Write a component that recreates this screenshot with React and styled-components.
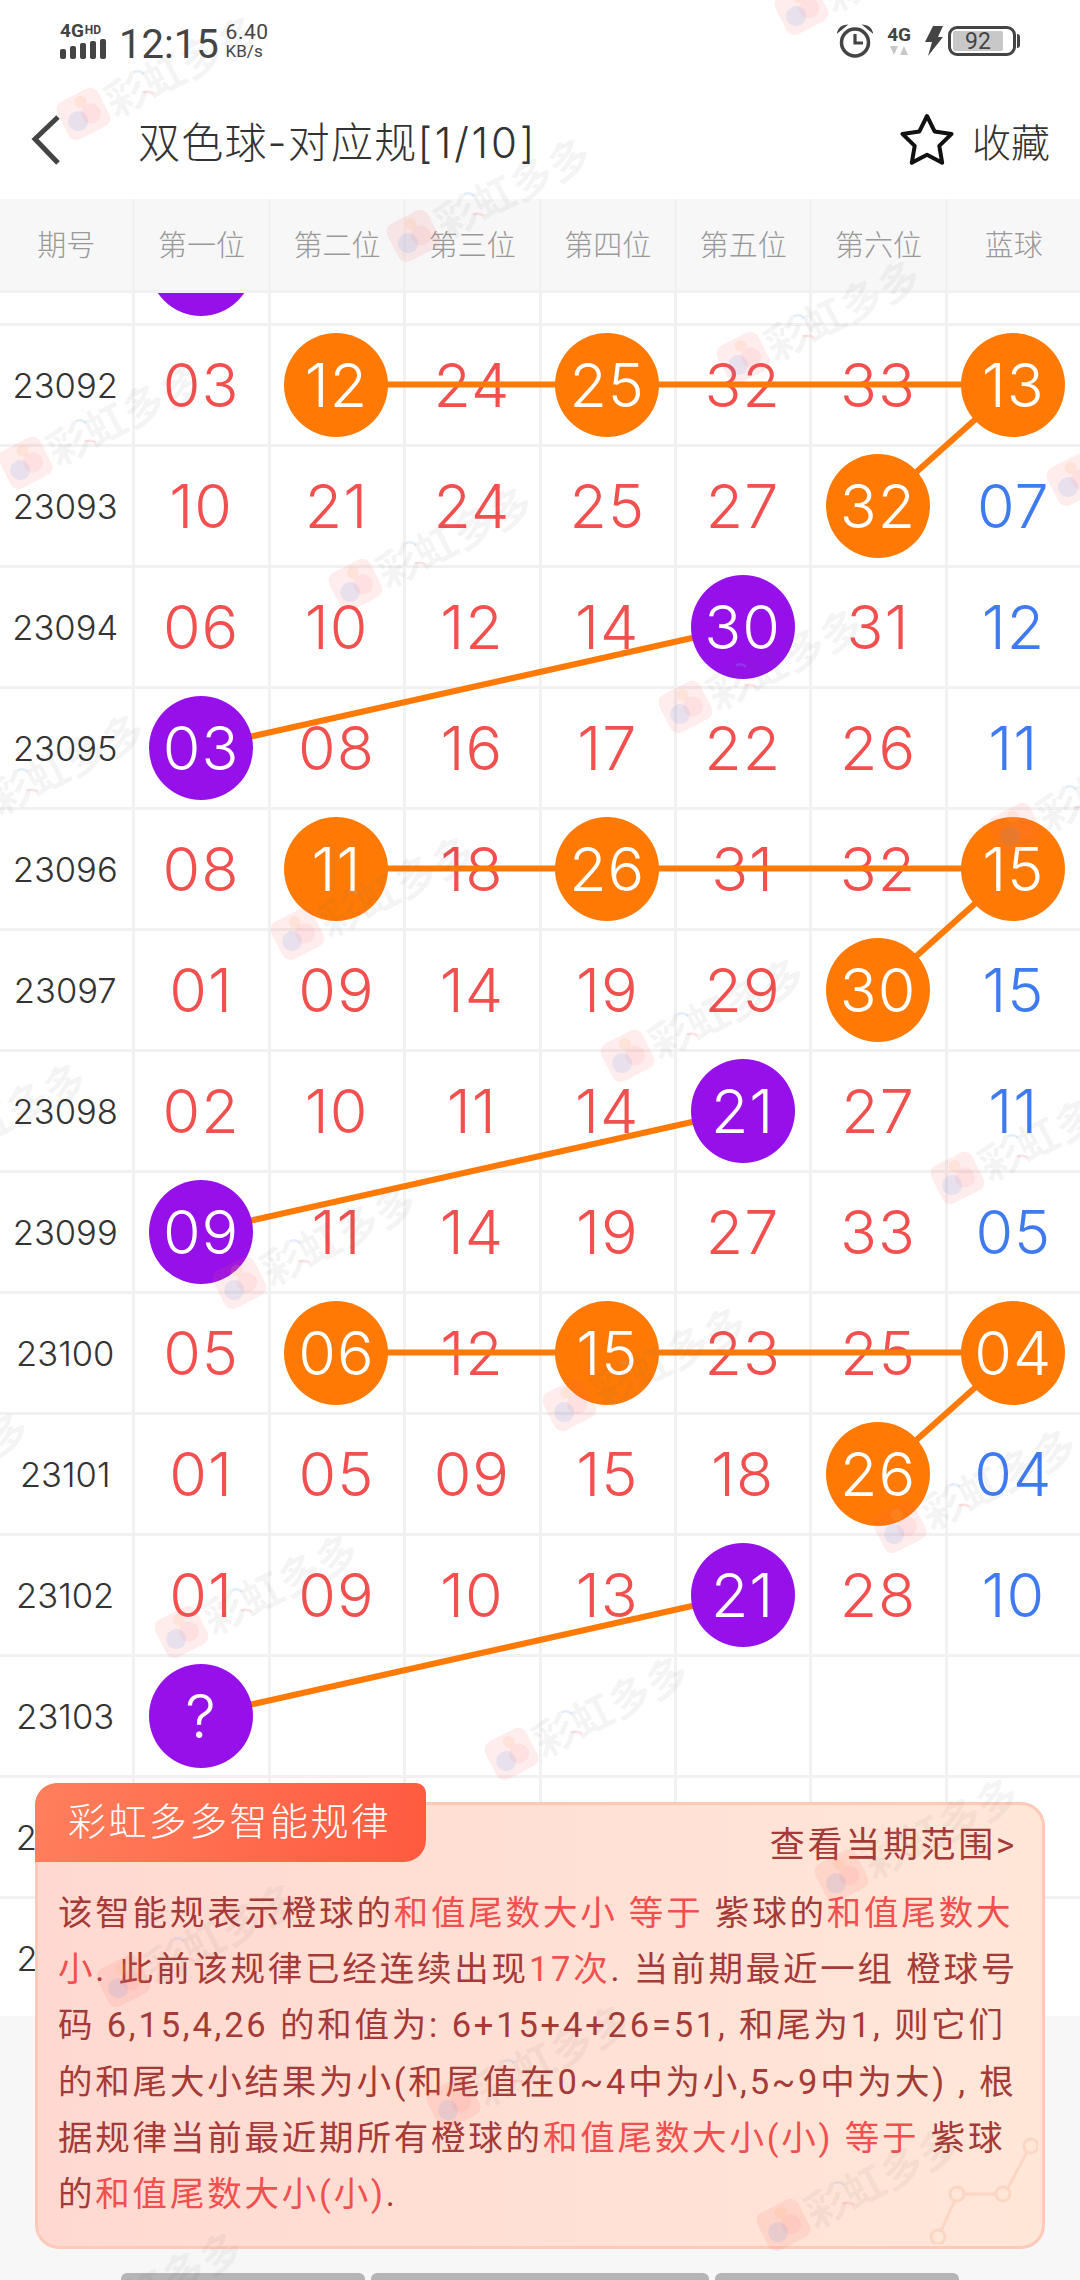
import React from "react";
import styled, { createGlobalStyle } from "styled-components";

const ROW_H = 121;
const COL_W = 135.4;
const RED = "#f24f4f";
const BLUE = "#3f7bf0";
const ORANGE = "#ff7a05";
const PURPLE = "#9610ea";

// o = orange ball, p = purple ball, both hold the column index
const rows = [
    { id: "", nums: ["", "", "", "", "", "", ""], p: [0] },
    { id: "23092", nums: ["03", "12", "24", "25", "32", "33", "13"], o: [1, 3, 6] },
    { id: "23093", nums: ["10", "21", "24", "25", "27", "32", "07"], o: [5] },
    { id: "23094", nums: ["06", "10", "12", "14", "30", "31", "12"], p: [4] },
    { id: "23095", nums: ["03", "08", "16", "17", "22", "26", "11"], p: [0] },
    { id: "23096", nums: ["08", "11", "18", "26", "31", "32", "15"], o: [1, 3, 6] },
    { id: "23097", nums: ["01", "09", "14", "19", "29", "30", "15"], o: [5] },
    { id: "23098", nums: ["02", "10", "11", "14", "21", "27", "11"], p: [4] },
    { id: "23099", nums: ["09", "11", "14", "19", "27", "33", "05"], p: [0] },
    { id: "23100", nums: ["05", "06", "12", "15", "23", "25", "04"], o: [1, 3, 6] },
    { id: "23101", nums: ["01", "05", "09", "15", "18", "26", "04"], o: [5] },
    { id: "23102", nums: ["01", "09", "10", "13", "21", "28", "10"], p: [4] },
    { id: "23103", nums: ["?", "", "", "", "", "", ""], p: [0] },
    { id: "23104", nums: ["", "", "", "", "", "", ""] },
    { id: "23105", nums: ["", "", "", "", "", "", ""] },
];

// [row, col] chains the orange lines run through
const chains = [
    [[1, 1], [1, 3], [1, 6], [2, 5]],
    [[3, 4], [4, 0]],
    [[5, 1], [5, 3], [5, 6], [6, 5]],
    [[7, 4], [8, 0]],
    [[9, 1], [9, 3], [9, 6], [10, 5]],
    [[11, 4], [12, 0]],
];

const headers = ["期号", "第一位", "第二位", "第三位", "第四位", "第五位", "第六位", "蓝球"];

const pointOf = ([r, c]) => `${(c + 1) * COL_W + 66.5},${r * ROW_H + 58.5}`;

const marks = [];
for (let i = -2; i < 5; i++) {
    for (let j = -1; j < 8; j++) {
        const x = 83 + i * 330 - j * 58;
        const y = 113 + i * 122 + j * 349;
        if (x > -200 && x < 1100 && y > -60 && y < 2330) marks.push({ x, y });
    }
}

const App = () => {
    return (
        <Page>
            <GlobalStyle />
            <StatusBar>
                <Network>
                    <NetLabel>4G<small>HD</small></NetLabel>
                    <Signal>
                        <i /><i /><i /><i /><i />
                    </Signal>
                </Network>
                <Clock>12:15</Clock>
                <Speed>
                    <span>6.40</span>
                    <small>KB/s</small>
                </Speed>
                <StatusRight>
                    <svg width="36" height="34" viewBox="0 0 36 34" fill="none" stroke="#444">
                        <circle cx="18" cy="18.5" r="13.5" strokeWidth="3.5" />
                        <path d="M18 10v9h8" strokeWidth="3.2" />
                        <path d="M1 8 Q3 2 9 1.5 Z M35 8 Q33 2 27 1.5 Z" fill="#444" strokeWidth="1.5" />
                    </svg>
                    <Mobile>
                        4G
                        <svg width="20" height="10" viewBox="0 0 20 10">
                            <path d="M1 0h8l-4 9zM11 9h8l-4-9z" fill="#c8c8c8" />
                        </svg>
                    </Mobile>
                    <svg width="18" height="30" viewBox="0 0 18 30">
                        <path d="M8 0h10l-5 11h5L3 30l4-14H0z" fill="#444" />
                    </svg>
                    <Battery>
                        <BatteryFill>92</BatteryFill>
                    </Battery>
                </StatusRight>
            </StatusBar>
            <NavBar>
                <svg width="30" height="50" viewBox="0 0 30 50" fill="none">
                    <path d="M27 2 4 24l23 24" stroke="#444" strokeWidth="5" />
                </svg>
                <Title>双色球-对应规<TitleIndex>[1/10]</TitleIndex></Title>
                <Favorite>
                    <svg width="56" height="54" viewBox="0 0 54 54" fill="none">
                        <path
                            d="M27 3l7.6 15.4 17 2.5-12.3 12 2.9 16.9L27 41.8l-15.2 8 2.9-16.9-12.3-12 17-2.5z"
                            stroke="#111"
                            strokeWidth="4"
                            strokeLinejoin="round"
                        />
                    </svg>
                    <span>收藏</span>
                </Favorite>
            </NavBar>
            <HeaderRow>
                {headers.map((h) => (
                    <HeaderCell key={h}>{h}</HeaderCell>
                ))}
            </HeaderRow>
            <TableBody>
                <Inner>
                    {rows.map((row, r) => (
                        <Row key={r}>
                            <IdCell>{row.id}</IdCell>
                            {row.nums.map((n, c) => {
                                const orange = row.o && row.o.includes(c);
                                const purple = row.p && row.p.includes(c);
                                return (
                                    <NumCell key={c} $blue={c === 6}>
                                        {orange || purple ? <Ball $color={orange ? ORANGE : PURPLE}>{n}</Ball> : n}
                                    </NumCell>
                                );
                            })}
                        </Row>
                    ))}
                    <Lines width="1080" height={ROW_H * 15} viewBox={`0 0 1080 ${ROW_H * 15}`}>
                        {chains.map((c, i) => (
                            <polyline key={i} points={c.map(pointOf).join(" ")} fill="none" stroke={ORANGE} strokeWidth="6" />
                        ))}
                    </Lines>
                </Inner>
            </TableBody>
            <Footer>
                <FooterBar $w={244} />
                <FooterBar $w={338} />
                <FooterBar $w={244} />
            </Footer>
            <Panel>
                <Tab>彩虹多多智能规律</Tab>
                <RangeLink>查看当期范围&gt;</RangeLink>
                <Rule>
                    <Line>该智能规表示橙球的<Hot>和值尾数大小 等于</Hot> 紫球的<Hot>和值尾数大</Hot></Line>
                    <Line><Hot>小</Hot>. 此前该规律已经连续出现<Hot>17次</Hot>. 当前期最近一组 橙球号</Line>
                    <Line>码 6,15,4,26 的和值为: 6+15+4+26=51, 和尾为1, 则它们</Line>
                    <Line>的和尾大小结果为小(和尾值在0~4中为小,5~9中为大) , 根</Line>
                    <Line>据规律当前最近期所有橙球的<Hot>和值尾数大小(小) 等于</Hot> 紫球</Line>
                    <Line>的<Hot>和值尾数大小(小)</Hot>.</Line>
                </Rule>
                <Deco width="110" height="110" viewBox="0 0 110 110" fill="none" stroke="#f9b9a0" strokeWidth="3">
                    <path d="M13 97 27 66M36 60h32M80 54l19-36" />
                    <circle cx="10" cy="103" r="7" />
                    <circle cx="29" cy="60" r="7" />
                    <circle cx="75" cy="60" r="7" />
                    <circle cx="103" cy="12" r="7" />
                </Deco>
            </Panel>
            <Watermarks>
                {marks.map((m, i) => (
                    <Mark key={i} style={{ left: m.x - 24, top: m.y - 30 }}>
                        <svg width="48" height="48" viewBox="0 0 48 48">
                            <rect x="1" y="3" width="46" height="42" rx="9" fill="#ff5a5a" fillOpacity=".11" />
                            <circle cx="16" cy="28" r="10" fill="#4f93ee" fillOpacity=".13" />
                            <circle cx="31" cy="27" r="10" fill="#ff7a7a" fillOpacity=".11" />
                            <circle cx="27" cy="12" r="6" fill="#ffb070" fillOpacity=".16" />
                        </svg>
                        <span>彩虹多多</span>
                        <Dabs width="12" height="34" viewBox="0 0 12 34" fill="none" strokeWidth="2.5">
                            <path d="M2 3Q8 3 10 9" stroke="#7fb0f0" strokeOpacity=".22" />
                            <path d="M1 25Q7 26 10 31" stroke="#ff7070" strokeOpacity=".2" />
                        </Dabs>
                    </Mark>
                ))}
            </Watermarks>
        </Page>
    );
};

const GlobalStyle = createGlobalStyle`
    body {
        margin: 0;
        background: #fff;
        font-family: Inter, "Noto Sans CJK SC", sans-serif;
    }
`;
const Page = styled.div`
    position: relative;
    width: 1080px;
    height: 2280px;
    overflow: hidden;
    display: flex;
    flex-direction: column;
    background: #f7f7f7;
    font-family: Inter, "Noto Sans CJK SC", sans-serif;
`;
const StatusBar = styled.div`
    height: 80px;
    flex: none;
    display: flex;
    align-items: flex-start;
    padding: 23px 64px 0 60px;
    box-sizing: border-box;
    background: #fff;
    color: #444;
    font-family: Roboto, sans-serif;
`;
const Network = styled.div`
    width: 46px;
    display: flex;
    flex-direction: column;
    gap: 1px;
`;
const NetLabel = styled.div`
    font-size: 19px;
    line-height: 15px;
    font-weight: 700;
    white-space: nowrap;
    small {
        font-size: 12px;
        vertical-align: 3px;
        margin-left: 1px;
    }
`;
const Signal = styled.div`
    display: flex;
    align-items: flex-end;
    gap: 4px;
    height: 20px;
    i {
        width: 6px;
        background: #444;
        border-radius: 2px;
    }
    i:nth-child(1) { height: 10px; }
    i:nth-child(2) { height: 13px; }
    i:nth-child(3) { height: 16px; }
    i:nth-child(4) { height: 18px; }
    i:nth-child(5) { height: 20px; }
`;
const Clock = styled.div`
    margin: 0 0 0 13px;
    font-size: 40px;
    line-height: 44px;
`;
const Speed = styled.div`
    margin: 0 0 0 7px;
    display: flex;
    flex-direction: column;
    font-size: 20px;
    line-height: 19px;
    span {
        font-size: 21px;
        letter-spacing: .5px;
    }
    small {
        font-size: 17px;
        line-height: 19px;
    }
`;
const StatusRight = styled.div`
    margin-left: auto;
    display: flex;
    align-items: center;
    height: 36px;
    gap: 14px;
`;
const Mobile = styled.div`
    display: flex;
    flex-direction: column;
    align-items: center;
    font-size: 19px;
    line-height: 18px;
    font-weight: 700;
    gap: 2px;
`;
const Battery = styled.div`
    position: relative;
    margin-left: -9px;
    width: 68px;
    height: 30px;
    box-sizing: border-box;
    border: 3px solid #444;
    border-radius: 9px;
    padding: 2px 10px 2px 2px;
    &::after {
        content: "";
        position: absolute;
        right: -7px;
        top: 5px;
        width: 3px;
        height: 14px;
        background: #444;
        border-radius: 0 3px 3px 0;
    }
`;
const BatteryFill = styled.div`
    height: 100%;
    background: #c8c8c8;
    border-radius: 2px;
    font-size: 23px;
    line-height: 21px;
    text-align: center;
`;
const NavBar = styled.div`
    height: 119px;
    flex: none;
    display: flex;
    align-items: center;
    padding: 0 30px 0 31px;
    box-sizing: border-box;
    background: #fff;
    svg {
        flex: none;
    }
`;
const Title = styled.div`
    margin-left: 77px;
    font-size: 42px;
    letter-spacing: 1.2px;
    font-weight: 300;
    color: #333;
    white-space: nowrap;
`;
const TitleIndex = styled.span`
    letter-spacing: 2.8px;
`;
const Favorite = styled.div`
    margin-left: auto;
    display: flex;
    align-items: center;
    gap: 17px;
    font-size: 39px;
    font-weight: 300;
    color: #333;
`;
const HeaderRow = styled.div`
    height: 94px;
    flex: none;
    display: grid;
    grid-template-columns: repeat(7, ${COL_W}px) 1fr;
    background: #f7f7f7;
    border-bottom: 3px solid #f1f1f1;
    box-sizing: border-box;
`;
const HeaderCell = styled.div`
    display: flex;
    align-items: center;
    justify-content: center;
    box-sizing: border-box;
    padding-bottom: 3px;
    border-right: 3px solid #f1f1f1;
    font-size: 29px;
    font-weight: 300;
    color: #999;
    &:last-child {
        border-right: 0;
    }
`;
const TableBody = styled.div`
    height: 1723px;
    flex: none;
    overflow: hidden;
    background: #fff;
`;
const Inner = styled.div`
    position: relative;
    margin-top: ${33 - ROW_H}px;
`;
const Row = styled.div`
    height: ${ROW_H}px;
    box-sizing: border-box;
    display: grid;
    grid-template-columns: repeat(7, ${COL_W}px) 1fr;
    border-bottom: 3px solid #f1f1f1;
`;
const IdCell = styled.div`
    display: flex;
    align-items: center;
    justify-content: center;
    box-sizing: border-box;
    padding-right: 2px;
    border-right: 3px solid #f1f1f1;
    font-size: 34.5px;
    font-weight: 300;
    color: #333;
`;
const NumCell = styled.div`
    display: flex;
    align-items: center;
    justify-content: center;
    box-sizing: border-box;
    padding-right: 1px;
    border-right: 3px solid #f1f1f1;
    font-size: 61px;
    letter-spacing: 1px;
    font-weight: 300;
    color: ${({ $blue }) => ($blue ? BLUE : RED)};
    &:last-child {
        border-right: 0;
    }
`;
const Ball = styled.div`
    position: relative;
    z-index: 2;
    width: 104px;
    height: 104px;
    flex: none;
    border-radius: 50%;
    display: flex;
    align-items: center;
    justify-content: center;
    background: ${({ $color }) => $color};
    color: #fff;
`;
const Lines = styled.svg`
    position: absolute;
    left: 0;
    top: 0;
    z-index: 1;
`;
const Footer = styled.div`
    flex: 1;
    display: flex;
    align-items: flex-end;
    gap: 6px;
    padding-left: 121px;
`;
const FooterBar = styled.div`
    width: ${({ $w }) => $w}px;
    height: 7px;
    background: #b5b5b5;
    border-radius: 6px 6px 0 0;
`;
const Panel = styled.div`
    position: absolute;
    z-index: 3;
    left: 35px;
    top: 1802px;
    width: 1010px;
    height: 447px;
    box-sizing: border-box;
    border: 3px solid #ffc9b8;
    border-radius: 24px;
    background: linear-gradient(90deg, #ffd9d1, #ffe7d8);
    padding: 21px 25px 0 20px;
    color: #a63a36;
    font-family: Roboto, "Noto Sans CJK SC", sans-serif;
`;
const Tab = styled.div`
    position: absolute;
    left: -3px;
    top: -22px;
    width: 391px;
    height: 79px;
    box-sizing: border-box;
    padding-left: 33px;
    border-radius: 22px 10px 22px 0;
    background: linear-gradient(100deg, #ff7f5c, #ff5a3f);
    color: #fff;
    font-size: 38px;
    line-height: 78px;
    letter-spacing: 2.4px;
    font-weight: 300;
    white-space: nowrap;
`;
const RangeLink = styled.div`
    text-align: right;
    font-size: 35px;
    line-height: 40px;
    letter-spacing: 2.7px;
`;
const Rule = styled.div`
    margin-top: 19px;
    font-size: 34.5px;
    line-height: 56.2px;
    letter-spacing: 2.8px;
`;
const Line = styled.div`
    white-space: pre;
`;
const Hot = styled.span`
    color: ${RED};
`;
const Deco = styled.svg`
    position: absolute;
    right: 4px;
    bottom: 2px;
    opacity: .35;
`;
const Watermarks = styled.div`
    position: absolute;
    z-index: 5;
    inset: 0;
    pointer-events: none;
`;
const Mark = styled.div`
    position: absolute;
    display: flex;
    align-items: center;
    gap: 2px;
    white-space: nowrap;
    transform-origin: 24px 30px;
    transform: rotate(-27deg);
    font-size: 42px;
    font-weight: 700;
    color: rgba(90, 90, 90, 0.065);
    svg {
        flex: none;
    }
`;
const Dabs = styled.svg`
    position: absolute;
    left: 86px;
    top: 14px;
`;

export default App;
